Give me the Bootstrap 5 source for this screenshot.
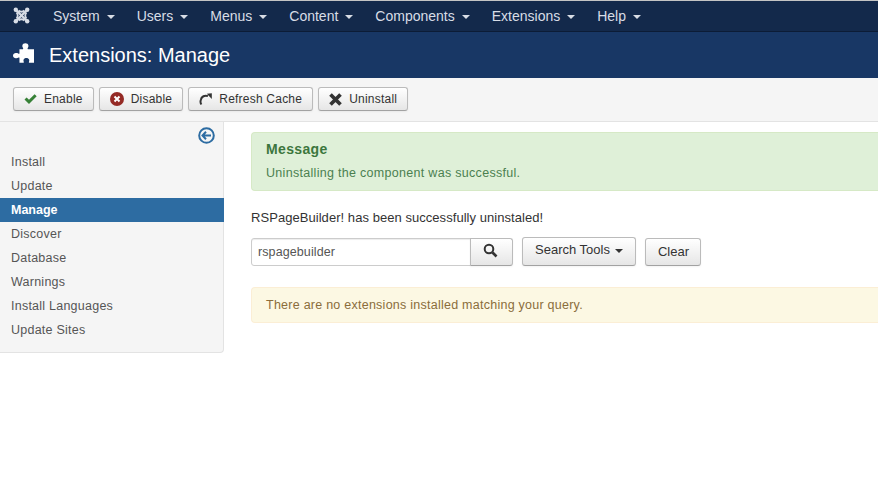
<!DOCTYPE html>
<html lang="en">
<head>
<meta charset="utf-8">
<title>Extensions: Manage</title>
<link rel="stylesheet" href="https://cdn.jsdelivr.net/npm/bootstrap@5.3.0/dist/css/bootstrap.min.css">
<style>
html,body{height:496px;overflow:hidden}
body{font-family:"Liberation Sans",Arial,sans-serif;font-size:13px;line-height:18px;color:#333;background:#fff}
.topbar{background:#13294b;border-top:1px solid #c4c4c4;border-bottom:1px solid #0c1c36;height:32px;padding-left:13px}
.toplogo{width:17px;height:17px;margin-right:23px;margin-top:-1px}
.topitem{color:#d8dde6;font-size:14px;margin-right:22px;line-height:30px;white-space:nowrap;text-decoration:none}
.caret-dn{display:inline-block;width:0;height:0;margin-left:7px;vertical-align:middle;border-top:4px solid currentColor;border-left:4px solid transparent;border-right:4px solid transparent}
.caret-near{margin-left:5px}
.subhead{background:#183765;height:46px;padding-left:13px;color:#fff}
.subhead h1{font-size:20px;line-height:46px;margin:0 0 0 15px;font-weight:400;font-family:inherit}
.puzzle{margin-bottom:4px}
.tools{background:#f5f5f5;border-bottom:1px solid #e3e3e3;height:44px;padding:9px 0 0 13px;gap:5px}
.gbtn{font-size:12px;line-height:18px;height:24px;padding:2px 10px;color:#333;background:linear-gradient(#fff,#e6e6e6);border:1px solid #bbb;border-bottom-color:#a2a2a2;border-radius:3px;box-shadow:inset 0 1px 0 rgba(255,255,255,.2),0 1px 2px rgba(0,0,0,.05);letter-spacing:.22px;white-space:nowrap}
.gbtn svg{display:block;flex:none}
.icon-gap{gap:7px}
.sidewrap{width:224px;height:231px;background:#f5f5f5;border-right:1px solid #e3e3e3;border-bottom:1px solid #e3e3e3;border-bottom-right-radius:4px;padding-top:5px;flex:none}
.sidetoggle{height:23px;padding-right:8px}
.sidelink{display:block;height:24px;line-height:24px;padding-left:11px;color:#555;font-size:12.5px;text-decoration:none;letter-spacing:.24px}
.sidelink.active-item{background:#2d6ca2;color:#fff;font-weight:700;letter-spacing:0;margin-right:-1px}
.mainpane{padding:10px 0 0 27px;flex:1;min-width:0;overflow:hidden}
.msgbox{margin-right:-12px;border-radius:4px 0 0 4px;border:1px solid;border-right:0}
.msg-ok{background:#dff0d8;border-color:#d6e9c6;color:#4b8050;height:59px;padding:7px 14px;font-size:12.5px;letter-spacing:.3px}
.msg-ok h4{font-family:inherit;font-size:14px;line-height:18px;font-weight:700;margin:0 0 6px;color:#3c763d;letter-spacing:.35px}
.note{margin:18px 0 11px;font-size:13px;line-height:18px;color:#333;letter-spacing:.05px}
.searchin{width:220px;height:28px;border:1px solid #ccc;border-radius:3px 0 0 3px;padding:0 6px;font-size:12.5px;color:#555;box-shadow:inset 0 1px 1px rgba(0,0,0,.075);font-family:inherit;letter-spacing:.1px}
.sbtn{height:28px;font-size:13px;line-height:18px;padding:3px 12px;color:#333;background:linear-gradient(#fff,#e6e6e6);border:1px solid #bbb;border-bottom-color:#a2a2a2;border-radius:3px;box-shadow:0 1px 2px rgba(0,0,0,.05);white-space:nowrap}
.s-go{width:43px;margin-left:-1px;border-radius:0 3px 3px 0;padding:0 3px 3px 0;display:flex;align-items:center;justify-content:center}
.s-tools{height:29px;margin:-1px 0 0 9px;padding-top:2px;padding-bottom:5px}
.s-clear{margin-left:9px;padding:3px 12px;width:56px}
.msg-warn{background:#fcf8e3;border-color:#fbeed5;color:#8a6d3b;height:36px;margin-top:21px;padding:8px 14px;font-size:12.5px;line-height:18px;letter-spacing:.25px}
</style>
</head>
<body>
<nav class="topbar d-flex align-items-center">
  <svg class="toplogo" viewBox="0 0 17 17" aria-hidden="true"><g fill="none" stroke="#d8dde6" stroke-width="2.4"><path d="M3 3 14 14M14 3 3 14"/><path d="M5.5 3.5Q8.5 6 11.5 3.5M13.5 5.5Q11 8.5 13.5 11.5M11.5 13.5Q8.5 11 5.5 13.5M3.5 11.5Q6 8.5 3.5 5.5" stroke-width="1.8"/></g><g fill="#d8dde6"><circle cx="2.8" cy="2.8" r="2.2"/><circle cx="14.2" cy="2.8" r="2.2"/><circle cx="2.8" cy="14.2" r="2.2"/><circle cx="14.2" cy="14.2" r="2.2"/></g></svg>
  <a class="topitem" href="#">System<span class="caret-dn"></span></a>
  <a class="topitem" href="#">Users<span class="caret-dn"></span></a>
  <a class="topitem" href="#">Menus<span class="caret-dn"></span></a>
  <a class="topitem" href="#">Content<span class="caret-dn"></span></a>
  <a class="topitem" href="#">Components<span class="caret-dn"></span></a>
  <a class="topitem" href="#">Extensions<span class="caret-dn"></span></a>
  <a class="topitem" href="#">Help<span class="caret-dn"></span></a>
</nav>
<header class="subhead d-flex align-items-center">
  <svg class="puzzle" width="21" height="20" viewBox="1 2 19.5 18" aria-hidden="true"><path fill="#fff" d="M7 7.5h3.2c.5-.3.3-.8 0-1.3-.5-.8-.6-1.5-.5-2.2C9.900 2.800 11 2 12.500 2s2.600.8 2.800 2c.1.7 0 1.400-.5 2.200-.3.500-.5 1 0 1.300H20.500v12.500H16c-.4-.2-.3-.7-.1-1.200.3-.7.300-1.500-.1-2.100-.5-.8-1.500-1.100-2.400-1.100s-1.900.3-2.400 1.100c-.4.6-.4 1.400-.1 2.100.2.500.3 1-.1 1.200H7v-4.500c-.3-.4-.8-.3-1.200 0-.7.400-1.400.5-2.200.4C2.300 15.700 1 14.800 1 13.500s1.300-2.200 2.600-2.400c.8-.1 1.500 0 2.200.4.400.3.900.4 1.200 0Z"/></svg>
  <h1>Extensions: Manage</h1>
</header>
<div class="tools d-flex align-items-start">
  <button class="gbtn d-flex align-items-center icon-gap" type="button"><svg width="13" height="12" viewBox="0 0 13 12" aria-hidden="true"><path fill="#378137" d="M.5 6.500 2.600 4.400 5 6.800 10.600 1.200 12.700 3.300 5 11Z"/></svg>Enable</button>
  <button class="gbtn d-flex align-items-center icon-gap" type="button"><svg width="14" height="14" viewBox="0 0 14 14" aria-hidden="true"><circle cx="7" cy="7" r="7" fill="#942a25"/><path d="M4.500 4.500 9.500 9.500M9.500 4.500 4.500 9.500" stroke="#fff" stroke-width="2"/></svg>Disable</button>
  <button class="gbtn d-flex align-items-center icon-gap" type="button"><svg width="13" height="13" viewBox="0 0 13 13" aria-hidden="true"><path fill="none" stroke="#333" stroke-width="2" d="M2.400 11.500A5 5 0 0 1 1.800 7 5 5 0 0 1 9 3.200"/><path fill="#333" d="M7.800 .8 12.800 .3 12.800 6Z"/></svg>Refresh Cache</button>
  <button class="gbtn d-flex align-items-center icon-gap" type="button"><svg width="13" height="13" viewBox="0 0 13 13" aria-hidden="true"><path d="M1.500 1.500 11.500 11.500M11.500 1.500 1.500 11.500" stroke="#333" stroke-width="3.700"/></svg>Uninstall</button>
</div>
<div class="d-flex">
  <aside class="sidewrap">
    <div class="sidetoggle d-flex justify-content-end"><svg width="17" height="17" viewBox="0 0 17 17" aria-hidden="true"><circle cx="8.500" cy="8.500" r="7.300" fill="none" stroke="#2d6ca2" stroke-width="2"/><path fill="none" stroke="#2d6ca2" stroke-width="2" d="M13 8.500H5M8 4.800 4.500 8.500 8 12.200"/></svg></div>
    <a class="sidelink" href="#">Install</a>
    <a class="sidelink" href="#">Update</a>
    <a class="sidelink active-item" href="#">Manage</a>
    <a class="sidelink" href="#">Discover</a>
    <a class="sidelink" href="#">Database</a>
    <a class="sidelink" href="#">Warnings</a>
    <a class="sidelink" href="#">Install Languages</a>
    <a class="sidelink" href="#">Update Sites</a>
  </aside>
  <main class="mainpane">
    <div class="msgbox msg-ok"><h4>Message</h4><div>Uninstalling the component was successful.</div></div>
    <p class="note">RSPageBuilder! has been successfully uninstaled!</p>
    <div class="d-flex align-items-start">
      <input class="searchin" type="text" value="rspagebuilder" aria-label="Search">
      <button class="sbtn s-go" type="button" aria-label="Search"><svg width="15" height="15" viewBox="0 0 15 15" aria-hidden="true"><circle cx="6" cy="6" r="4.300" fill="none" stroke="#333" stroke-width="2"/><path d="M9.500 9.500 13.500 13.500" stroke="#333" stroke-width="2.600"/></svg></button>
      <button class="sbtn s-tools" type="button">Search Tools<span class="caret-dn caret-near"></span></button>
      <button class="sbtn s-clear" type="button">Clear</button>
    </div>
    <div class="msgbox msg-warn">There are no extensions installed matching your query.</div>
  </main>
</div>
<script src="https://cdn.jsdelivr.net/npm/bootstrap@5.3.0/dist/js/bootstrap.bundle.min.js"></script>
</body>
</html>
